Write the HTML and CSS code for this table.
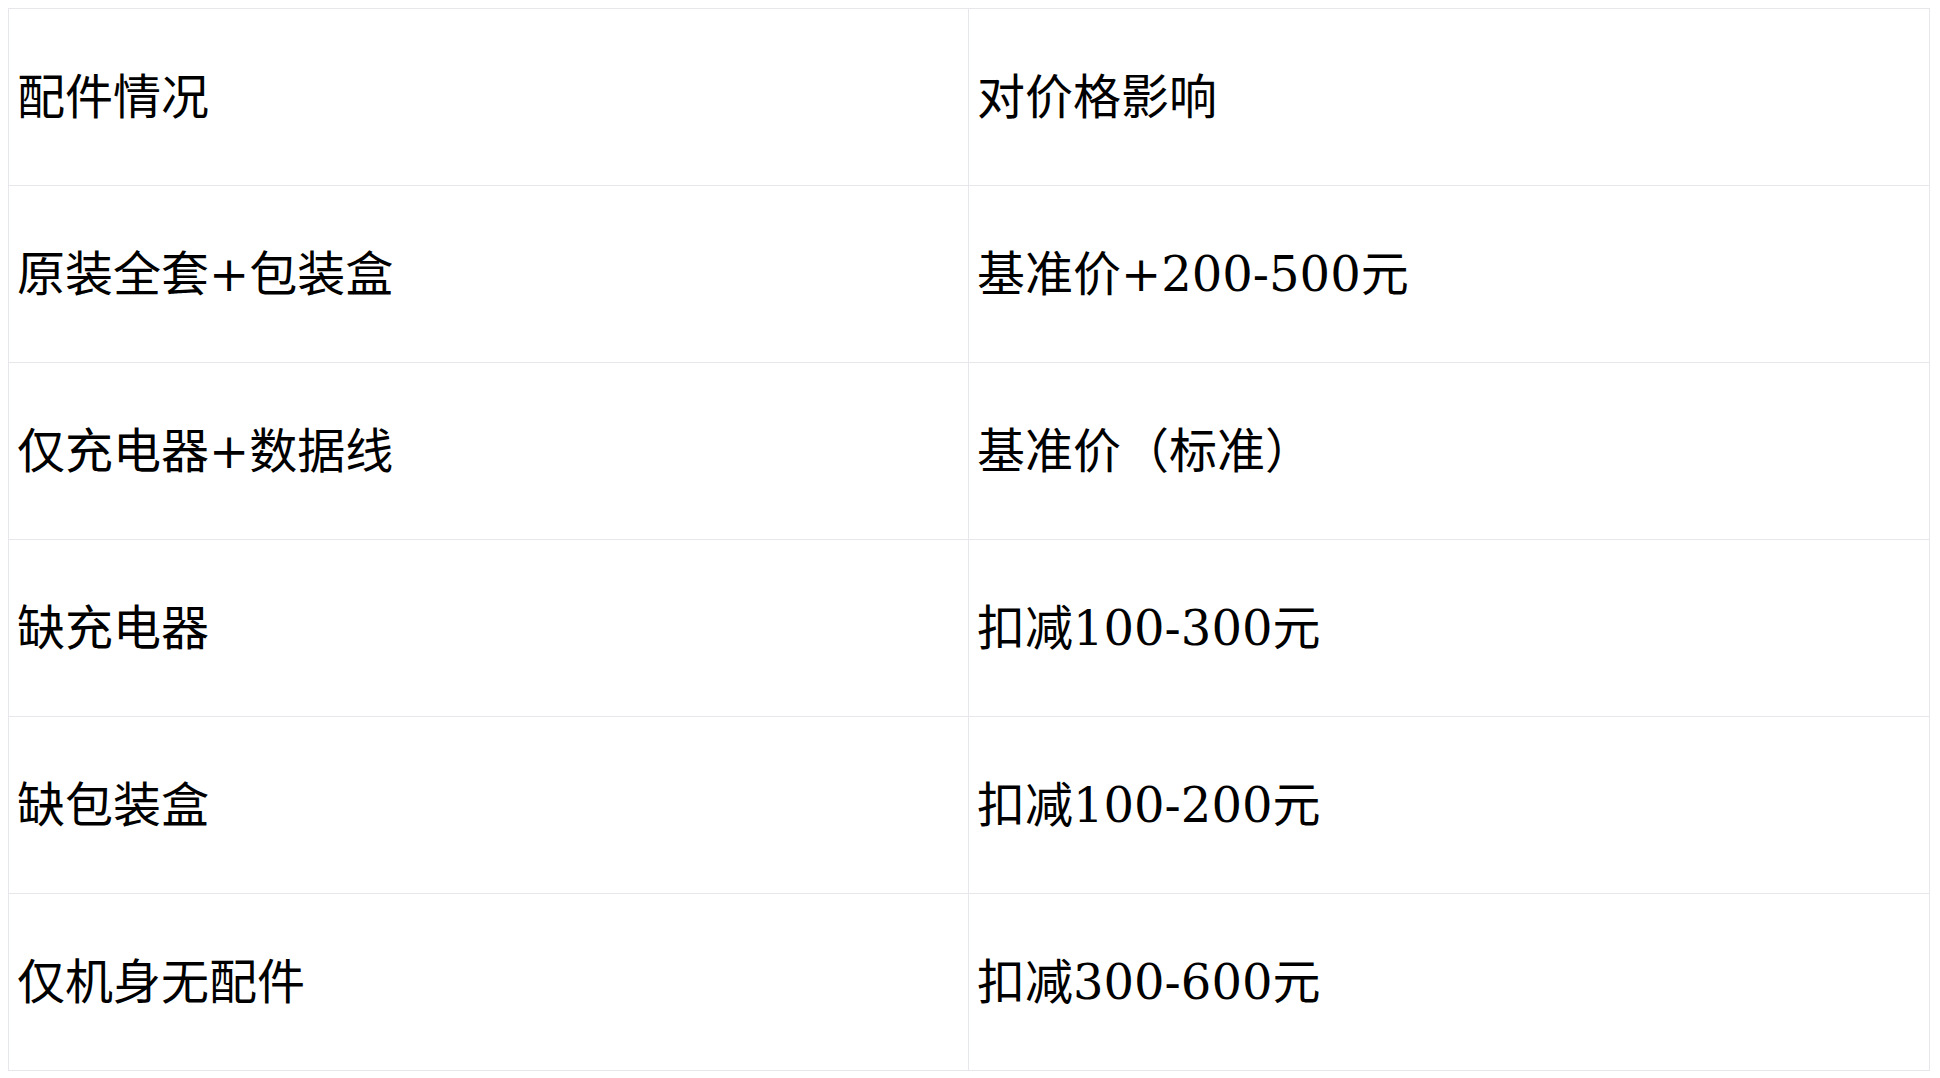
FILE: index.html
```html
<!DOCTYPE html>
<html lang="zh-CN">
<head>
<meta charset="utf-8">
<title>配件情况</title>
<link rel="stylesheet" href="styles.css">
</head>
<body>
<table class="price-table">
  <colgroup>
    <col class="col-item">
    <col class="col-effect">
  </colgroup>
  <tbody>
    <tr><td class="cell">配件情况</td><td class="cell">对价格影响</td></tr>
    <tr><td class="cell">原装全套+包装盒</td><td class="cell">基准价+200-500元</td></tr>
    <tr><td class="cell">仅充电器+数据线</td><td class="cell">基准价（标准）</td></tr>
    <tr><td class="cell">缺充电器</td><td class="cell">扣减100-300元</td></tr>
    <tr><td class="cell">缺包装盒</td><td class="cell">扣减100-200元</td></tr>
    <tr><td class="cell">仅机身无配件</td><td class="cell">扣减300-600元</td></tr>
  </tbody>
</table>
</body>
</html>
```
FILE: styles.css
```css
body {
  margin: 8px;
  background: #ffffff;
  color: #000000;
  font-family: "DejaVu Serif", "Noto Sans CJK SC", serif;
}

.price-table {
  width: 1921px;
  border-collapse: collapse;
  table-layout: fixed;
}

.col-item {
  width: 960px;
}

.col-effect {
  width: 961px;
}

.cell {
  border: 1px solid #e5e7eb;
  padding: 53px 8px;
  font-size: 48px;
  font-weight: 400;
  line-height: 70px;
  height: 70px;
  text-align: left;
  vertical-align: middle;
}
```
